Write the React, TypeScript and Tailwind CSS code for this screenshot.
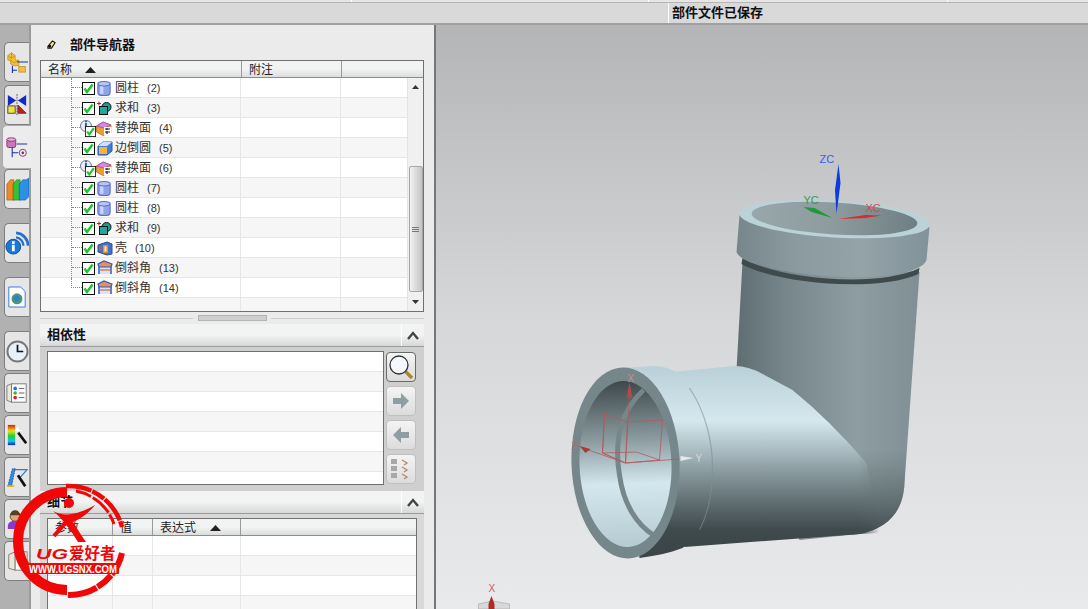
import type { ReactNode } from 'react';

const FONT = '"Liberation Sans", "Noto Sans CJK SC", sans-serif';

type Feature = { name: string; id: number; kind: 'cyl' | 'unite' | 'replace' | 'blend' | 'shell' | 'chamfer' };

const features: Feature[] = [
  { name: '圆柱', id: 2, kind: 'cyl' },
  { name: '求和', id: 3, kind: 'unite' },
  { name: '替换面', id: 4, kind: 'replace' },
  { name: '边倒圆', id: 5, kind: 'blend' },
  { name: '替换面', id: 6, kind: 'replace' },
  { name: '圆柱', id: 7, kind: 'cyl' },
  { name: '圆柱', id: 8, kind: 'cyl' },
  { name: '求和', id: 9, kind: 'unite' },
  { name: '壳', id: 10, kind: 'shell' },
  { name: '倒斜角', id: 13, kind: 'chamfer' },
  { name: '倒斜角', id: 14, kind: 'chamfer' },
];

function Check({ className }: { className: string }) {
  return (
    <svg viewBox="0 0 13 13" className={className}>
      <rect x="0.5" y="0.5" width="12" height="12" fill="#fff" stroke="#111" />
      <path d="M2.5 6.5 L5 10 L10.5 2.5" fill="none" stroke="#19c52c" strokeWidth="2.4" />
    </svg>
  );
}

function FeatureIcon({ kind }: { kind: Feature['kind'] }) {
  if (kind === 'cyl') {
    return (
      <svg viewBox="1.5 0.5 12 13.5" className="w-[14px] h-[15px]">
        <rect x="2" y="2" width="11" height="11.5" rx="3" fill="#8ea4ea" stroke="#5a70c8" />
        <rect x="4" y="4" width="3" height="8" fill="#c8d4f8" />
        <ellipse cx="7.5" cy="3" rx="5.5" ry="2" fill="#b9c6f2" stroke="#5a70c8" />
      </svg>
    );
  }
  if (kind === 'unite') {
    return (
      <svg viewBox="0 0 15 15" className="w-[15px] h-[15px]">
        <path d="M0 2.5 H4 M2 0.5 V4.5" stroke="#e01010" />
        <circle cx="9.5" cy="6" r="4.5" fill="#1f9c92" stroke="#111" />
        <rect x="2.5" y="5.5" width="8" height="8" fill="#23a89c" stroke="#111" />
      </svg>
    );
  }
  if (kind === 'blend') {
    return (
      <svg viewBox="0 0 16 15" className="w-[16px] h-[15px]">
        <path d="M1 5 L6 1 H15 V10 L10 14 H1 Z" fill="#3f80d8" stroke="#2a5aa8" />
        <path d="M1 5 L6 1 H15 L10 5 Z" fill="#cfe2fa" />
        <path d="M2 6 H10 V13 H2 Z" fill="#f6b23c" />
      </svg>
    );
  }
  if (kind === 'shell') {
    return (
      <svg viewBox="0 0 16 15" className="w-[16px] h-[15px]">
        <path d="M1 4 L10 1 L15 3 V13 L10 14 L1 11 Z" fill="#3f72c8" stroke="#2a4c90" />
        <rect x="6" y="4" width="5" height="8" fill="#f08a28" />
        <rect x="7.5" y="5.5" width="2" height="5" fill="#fff0d0" />
        <path d="M2 6 L5 5 V10 L2 9 Z" fill="#d8562a" />
      </svg>
    );
  }
  if (kind === 'chamfer') {
    return (
      <svg viewBox="0 0 16 16" className="w-[16px] h-[16px]">
        <path d="M1 4 L7 1 L15 4 V14 H1 Z" fill="#d4e4fa" />
        <path d="M1 4 L7 1 L15 4 L14 7 H2 Z" fill="#f08c58" stroke="#1e5ed0" strokeWidth="1.2" />
        <path d="M2 7 V14 M14 7 V14" stroke="#1e5ed0" strokeWidth="1.4" />
        <path d="M2 10 H14" stroke="#d86a30" strokeWidth="1.2" />
      </svg>
    );
  }
  return (
    <svg viewBox="0 0 16 15" className="w-[16px] h-[15px]">
      <path d="M0.5 5 L7 1 L15 4 V12 L7 14.5 L0.5 11 Z" fill="#f39a28" stroke="#b05a20" strokeWidth="0.7" />
      <path d="M0.5 5 L7 1 L15 4 L8 7 Z" fill="#d28adf" stroke="#8a4aa8" strokeWidth="0.7" />
      <rect x="8" y="6" width="7.5" height="8.5" fill="#fff" />
      <path d="M9 8 H14 M9 11 H14 M11 7 V9 M11 10 V13" stroke="#222" strokeWidth="1.2" />
    </svg>
  );
}

function TreeRow({ item, index }: { item: Feature; index: number }) {
  const last = index === features.length - 1;
  return (
    <div className="h-5 flex items-start">
      <div className="w-[200px] h-5 flex items-start pl-[30px] shrink-0">
        {last ? (
          <div className="w-[11px] h-[10px] border-l border-b border-dotted border-[#8a8a8a]" />
        ) : (
          <div className="w-[11px] h-5 border-l border-dotted border-[#8a8a8a]">
            <div className="h-[10px] border-b border-dotted border-[#8a8a8a]" />
          </div>
        )}
        <div className="relative w-[33px] h-5 shrink-0 flex items-center">
          {item.kind === 'replace' ? (
            <>
              <div className="absolute left-[-2px] top-[2px] w-[12px] h-[12px] rounded-full bg-[#e6ecfa] border border-[#6a7698] flex items-center justify-center text-[10px] leading-none font-bold text-[#14205c]">
                i
              </div>
              <Check className="absolute left-[3px] top-[8px] w-[11px] h-[11px]" />
              <div className="absolute left-[14px] top-[3px]">
                <FeatureIcon kind={item.kind} />
              </div>
            </>
          ) : (
            <>
              <Check className="w-[13px] h-[13px] shrink-0" />
              <div className="ml-[2px] shrink-0 flex items-center">
                <FeatureIcon kind={item.kind} />
              </div>
            </>
          )}
        </div>
        <span className="text-[12px] leading-5 text-[#333] whitespace-nowrap">
          {item.name}
          <span className="ml-[8px] text-[11px]">({item.id})</span>
        </span>
      </div>
    </div>
  );
}

function HeaderCell({ width, children }: { width: string; children?: ReactNode }) {
  return (
    <div className={`${width} h-full border-r border-[#9a9a9a] flex items-center pl-[7px] pt-[1px] text-[12px] text-[#222] shrink-0`}>
      {children}
    </div>
  );
}

function Stripes({ rows, columns }: { rows: number; columns: string[] }) {
  return (
    <div className="relative">
      {Array.from({ length: rows }).map((_, i) => (
        <div key={i} className={`h-5 flex border-b border-[#e6e6e6] ${i % 2 ? 'bg-[#f6f6f6]' : 'bg-white'}`}>
          {columns.map((w) => (
            <div key={w} className={`${w} h-full border-r border-[#e6e6e6] shrink-0`} />
          ))}
        </div>
      ))}
    </div>
  );
}

function SectionHeader({ title, height }: { title: string; height: string }) {
  return (
    <div className={`${height} flex bg-gradient-to-b from-[#f2f3f3] from-50% to-[#d6d7d7] border-b border-[#9c9c9c]`}>
      <div className="flex-1 pl-[7px] flex items-center text-[13px] font-bold text-[#111]">{title}</div>
      <div className="w-[23px] border-l border-white flex items-center justify-center">
        <svg viewBox="0 0 12 9" className="w-[12px] h-[9px]">
          <path d="M1 8 L6 2 L11 8" fill="none" stroke="#444" strokeWidth="2.4" />
        </svg>
      </div>
    </div>
  );
}

function SideButton({ active, children }: { active?: boolean; children: ReactNode }) {
  return (
    <div
      className={`w-[30px] h-[30px] rounded-[4px] border flex items-center justify-center bg-gradient-to-b from-[#f4f4f4] to-[#dcdcdc] ${
        active ? 'border-[#6a6a6a]' : 'border-[#c0c0c0]'
      }`}
    >
      {children}
    </div>
  );
}

function RailTab({ selected, className, children }: { selected?: boolean; className?: string; children: ReactNode }) {
  return (
    <div
      className={`shrink-0 rounded-l-[5px] flex items-center justify-center overflow-hidden ${
        selected
          ? 'h-[44px] w-[29px] ml-[2px] bg-[#ececec] border-l border-t border-b border-[#aaa]'
          : 'h-[40px] w-[25px] ml-[4px] bg-[#e6e6e6] border border-r-0 border-[#7e7e7e]'
      } ${className ?? ''}`}
    >
      {children}
    </div>
  );
}

function RailIcons() {
  return (
    <div className="w-[31px] shrink-0 bg-[#b1b1b1] flex flex-col pt-[17px] border-r-2 border-[#9a9a9a]">
      <RailTab>
        <svg viewBox="0 0 24 24" className="w-[22px] h-[22px]">
          <path d="M2 5 L6 2 L10 5 V10 L14 10 V16 L9 16 L5 14 V10 L2 10 Z" fill="#f2c23a" stroke="#b88a18" strokeWidth="0.8" />
          <path d="M6 2 V8 M2 5 L6 8 L10 5 M5 10 L9 13 L14 10" fill="none" stroke="#b88a18" strokeWidth="0.8" />
          <path d="M7 16 V24 M7 21 H12 M12 12 H24" stroke="#1a30b8" strokeWidth="1.2" />
          <rect x="14" y="17" width="7" height="6" fill="#f2c23a" stroke="#b88a18" strokeWidth="0.8" />
        </svg>
      </RailTab>
      <RailTab className="mt-[3px]">
        <svg viewBox="0 0 24 24" className="w-[22px] h-[22px]">
          <path d="M2 1 L11 7 L2 13 Z M22 1 L13 7 L22 13 Z" fill="#1428c8" />
          <path d="M12 0 V24" stroke="#555" strokeDasharray="2 1" />
          <rect x="2" y="13" width="8" height="8" fill="#f2e23a" stroke="#444" />
          <path d="M13 12 L22 21 H13 Z" fill="#d01818" stroke="#444" />
        </svg>
      </RailTab>
      <RailTab selected>
        <svg viewBox="0 0 26 26" className="w-[23px] h-[23px]">
          <rect x="1" y="3" width="10" height="10" rx="2" fill="#c87ab4" stroke="#8a2a70" />
          <ellipse cx="6" cy="4" rx="5" ry="2" fill="#e6b4d8" stroke="#8a2a70" />
          <path d="M12 9 H24 M7 13 V24 M7 19 H14" stroke="#1a30b8" strokeWidth="1.2" />
          <circle cx="19" cy="19" r="4" fill="none" stroke="#8a2a70" />
          <circle cx="19" cy="19" r="1.5" fill="#8a2a70" />
        </svg>
      </RailTab>
      <RailTab>
        <svg viewBox="0 0 26 28" className="w-[23px] h-[25px]">
          <path d="M1 8 L5 3 H9 V26 H1 Z" fill="#f08a20" stroke="#8a4a10" strokeWidth="0.6" />
          <path d="M8 8 L12 3 H16 V26 H8 Z" fill="#38c038" stroke="#186a18" strokeWidth="0.6" />
          <path d="M15 8 L19 3 H23 L26 1 V22 L22 26 H15 Z" fill="#2a90e8" stroke="#104a8a" strokeWidth="0.6" />
        </svg>
      </RailTab>
      <RailTab className="mt-[14px]">
        <svg viewBox="0 0 26 26" className="w-[24px] h-[24px]">
          <path d="M12 2 A14 14 0 0 1 25 16" fill="none" stroke="#2a70c8" strokeWidth="3" />
          <path d="M12 7 A9 9 0 0 1 20 16" fill="none" stroke="#2a70c8" strokeWidth="2.5" />
          <circle cx="9" cy="17" r="8" fill="#1a78d8" stroke="#0c4a90" />
          <rect x="7.5" y="15" width="3" height="7" fill="#fff" />
          <rect x="7.5" y="11" width="3" height="3" fill="#fff" />
        </svg>
      </RailTab>
      <RailTab className="mt-[14px]">
        <svg viewBox="0 0 22 24" className="w-[20px] h-[22px]">
          <path d="M2 1 H15 L20 6 V23 H2 Z" fill="#fff" stroke="#2a70d8" />
          <circle cx="11" cy="14" r="6" fill="#4a9a6a" />
          <path d="M7 12 L11 10 L15 12 L13 16 L9 17 Z" fill="#3a7ad0" />
        </svg>
      </RailTab>
      <RailTab className="mt-[14px]">
        <svg viewBox="0 0 24 24" className="w-[23px] h-[23px]">
          <circle cx="12" cy="12" r="10.5" fill="#e8f0fa" stroke="#777" strokeWidth="2" />
          <path d="M12 5 V12 H18" fill="none" stroke="#111" strokeWidth="1.8" />
        </svg>
      </RailTab>
      <RailTab className="mt-[2px]">
        <svg viewBox="0 0 24 24" className="w-[22px] h-[22px]">
          <path d="M1 4 L6 2 V22 L1 20 Z" fill="#ece8d8" stroke="#777" />
          <rect x="6" y="2" width="16" height="20" fill="#fff" stroke="#777" />
          <circle cx="10" cy="7" r="2" fill="#2a70d8" />
          <circle cx="10" cy="12" r="2" fill="#38b838" />
          <circle cx="10" cy="17" r="2" fill="#d82020" />
          <path d="M14 7 H20 M14 12 H20 M14 17 H20" stroke="#555" />
        </svg>
      </RailTab>
      <RailTab className="mt-[2px]">
        <svg viewBox="0 0 24 24" className="w-[22px] h-[22px]">
          <defs>
            <linearGradient id="rainbow" x1="0" y1="0" x2="0" y2="1">
              <stop offset="0" stopColor="#e01818" />
              <stop offset="0.3" stopColor="#e8e018" />
              <stop offset="0.55" stopColor="#18d038" />
              <stop offset="0.8" stopColor="#18c8e0" />
              <stop offset="1" stopColor="#1818e0" />
            </linearGradient>
          </defs>
          <rect x="2" y="1" width="8" height="22" fill="url(#rainbow)" />
          <path d="M13 9 L22 21" stroke="#111" strokeWidth="3" />
          <path d="M11 6 L13 2 L14 6 L18 7 L14 8 L13 11 L12 8 L9 7 Z" fill="#fff" />
        </svg>
      </RailTab>
      <RailTab className="mt-[2px]">
        <svg viewBox="0 0 24 24" className="w-[22px] h-[22px]">
          <path d="M2 22 L7 3 H10 L6 22 Z" fill="#3a88d8" stroke="#1a58a8" strokeDasharray="2 1" />
          <path d="M9 4 H23 L14 14" fill="none" stroke="#3a78c8" strokeWidth="1.4" />
          <path d="M13 10 L21 22" stroke="#111" strokeWidth="3" />
          <path d="M1 22 H9" stroke="#e0b818" strokeWidth="2" />
        </svg>
      </RailTab>
      <RailTab className="mt-[2px]">
        <svg viewBox="0 0 24 26" className="w-[22px] h-[24px]">
          <circle cx="10" cy="10" r="5.5" fill="#d8a878" stroke="#6a4a20" />
          <path d="M4.5 9 A5.5 5.5 0 0 1 15.5 9 Z" fill="#5a4020" />
          <path d="M2 24 V20 Q3 15 10 15 Q17 15 18 20 V24 Z" fill="#8a3ac8" />
          <rect x="18" y="2" width="6" height="5" fill="#d8a040" />
        </svg>
      </RailTab>
      <RailTab className="mt-[2px]">
        <svg viewBox="0 0 24 26" className="w-[22px] h-[24px]">
          <path d="M3 6 L10 3 V23 L3 21 Z" fill="#ece8d8" stroke="#777" />
          <rect x="10" y="3" width="13" height="20" fill="#fff" stroke="#777" />
        </svg>
      </RailTab>
    </div>
  );
}

function PartNavigator() {
  return (
    <div className="w-[405px] shrink-0 bg-[#ebebeb] border-r-2 border-[#777] flex flex-col pl-[9px] pr-[10px] overflow-hidden">
      <div className="h-[35px] shrink-0 flex items-center pl-[7px] pt-[4px]">
        <svg viewBox="0 0 10 10" className="w-[9px] h-[9px]">
          <path d="M1 7 L6 1 L9 3 L5 9 H1 Z" fill="#f4e48a" stroke="#111" strokeWidth="1.2" />
          <circle cx="3" cy="7" r="1.6" fill="#111" />
        </svg>
        <span className="ml-[14px] text-[13px] font-bold text-[#111]">部件导航器</span>
      </div>

      <div className="h-[252px] shrink-0 border border-[#707070] bg-white flex flex-col overflow-hidden">
        <div className="h-[17px] shrink-0 flex bg-gradient-to-b from-[#f2f3f3] from-50% to-[#dcdddd] border-b border-[#8c8c8c]">
          <HeaderCell width="w-[201px]">
            名称
            <svg viewBox="0 0 11 6" className="ml-[13px] w-[11px] h-[6px]">
              <path d="M0 6 L5.5 0 L11 6 Z" fill="#222" />
            </svg>
          </HeaderCell>
          <HeaderCell width="w-[100px]">附注</HeaderCell>
        </div>
        <div className="relative flex-1 flex overflow-hidden">
          <div className="w-[366px] shrink-0">
            <div className="relative">
              <Stripes rows={12} columns={['w-[200px]', 'w-[100px]']} />
              <div className="absolute inset-0">
                {features.map((f, i) => (
                  <TreeRow key={f.id} item={f} index={i} />
                ))}
              </div>
            </div>
          </div>
          <div className="flex-1 bg-[#f0f0f0] border-l border-[#e4e4e4] flex flex-col items-center pt-[7px] pb-[7px]">
            <svg viewBox="0 0 7 4" className="w-[7px] h-[4px] shrink-0">
              <path d="M0 4 L3.5 0 L7 4 Z" fill="#333" />
            </svg>
            <div className="mt-[77px] w-[14px] h-[126px] shrink-0 rounded-[2px] border border-[#a8a8a8] bg-gradient-to-r from-[#f2f2f2] to-[#c4c4c4] flex flex-col items-center justify-center gap-[1px]">
              <div className="w-[7px] border-t border-[#777]" />
              <div className="w-[7px] border-t border-[#777]" />
              <div className="w-[7px] border-t border-[#777]" />
            </div>
            <svg viewBox="0 0 7 4" className="mt-[8px] w-[7px] h-[4px] shrink-0">
              <path d="M0 0 L3.5 4 L7 0 Z" fill="#333" />
            </svg>
          </div>
        </div>
      </div>

      <div className="h-[12px] shrink-0 flex items-center">
        <div className="w-[153px] border-t border-[#cfcfcf] border-b-white" />
        <div className="ml-[5px] w-[69px] h-[6px] bg-[#cfcfcf] border border-[#b4b4b4]" />
        <div className="ml-[4px] flex-1 border-t border-[#cfcfcf]" />
      </div>

      <SectionHeader title="相依性" height="h-[23px] shrink-0" />
      <div className="h-[144px] shrink-0 bg-[#cfcfcf] flex pl-[7px] pt-[4px]">
        <div className="w-[337px] h-[134px] border border-[#707070] bg-white overflow-hidden">
          <Stripes rows={7} columns={[]} />
        </div>
        <div className="ml-[2px] flex flex-col gap-[4px] pt-[1px]">
          <SideButton active>
            <svg viewBox="0 0 26 26" className="w-[26px] h-[26px]">
              <path d="M17 17 L24 24" stroke="#a88838" strokeWidth="3.4" />
              <circle cx="11" cy="11" r="9" fill="#f4f8fc" stroke="#333" strokeWidth="1.3" />
            </svg>
          </SideButton>
          <SideButton>
            <svg viewBox="0 0 16 16" className="w-[16px] h-[16px]">
              <path d="M0 5 H8 V0 L16 8 L8 16 V11 H0 Z" fill="#8e9ea2" />
            </svg>
          </SideButton>
          <SideButton>
            <svg viewBox="0 0 16 16" className="w-[16px] h-[16px]">
              <path d="M16 5 H8 V0 L0 8 L8 16 V11 H16 Z" fill="#8e9ea2" />
            </svg>
          </SideButton>
          <SideButton>
            <svg viewBox="0 0 22 22" className="w-[22px] h-[22px]">
              <rect x="1" y="1" width="6" height="5" fill="#a8a8a8" />
              <rect x="1" y="8" width="6" height="5" fill="#a8a8a8" />
              <rect x="1" y="15" width="6" height="5" fill="#a8a8a8" />
              <path d="M12 2 L17 5 L14 7 M12 9 L17 12 L14 14 M12 16 L17 19 L14 21" fill="none" stroke="#b88a70" strokeWidth="1.4" />
            </svg>
          </SideButton>
        </div>
      </div>

      <SectionHeader title="细节" height="h-[23px] shrink-0" />
      <div className="flex-1 min-h-0 bg-[#d8d8d8] pl-[7px] pr-[7px] pt-[4px]">
        <div className="h-full border border-[#707070] border-b-0 bg-white overflow-hidden">
          <div className="h-[17px] flex bg-gradient-to-b from-[#f2f3f3] from-50% to-[#dcdddd] border-b border-[#8c8c8c]">
            <HeaderCell width="w-[65px]">参数</HeaderCell>
            <HeaderCell width="w-[40px]">值</HeaderCell>
            <HeaderCell width="w-[88px]">
              表达式
              <svg viewBox="0 0 11 6" className="ml-[14px] w-[11px] h-[6px]">
                <path d="M0 6 L5.5 0 L11 6 Z" fill="#222" />
              </svg>
            </HeaderCell>
          </div>
          <Stripes rows={4} columns={['w-[65px]', 'w-[40px]', 'w-[88px]']} />
        </div>
      </div>
    </div>
  );
}

function Model() {
  return (
    <svg viewBox="437 25 651 584" className="block w-full h-full">
      <defs>
        <linearGradient id="pipeV" x1="738" y1="0" x2="920" y2="0" gradientUnits="userSpaceOnUse">
          <stop offset="0" stopColor="#5f6e72" />
          <stop offset="0.25" stopColor="#76858a" />
          <stop offset="0.65" stopColor="#8d9da1" />
          <stop offset="1" stopColor="#7f8f93" />
        </linearGradient>
        <linearGradient id="flangeTop" x1="737" y1="0" x2="930" y2="0" gradientUnits="userSpaceOnUse">
          <stop offset="0" stopColor="#76868a" />
          <stop offset="0.3" stopColor="#8b9a9e" />
          <stop offset="0.65" stopColor="#93a3a7" />
          <stop offset="1" stopColor="#82929a" />
        </linearGradient>
        <linearGradient id="topHole" x1="752" y1="0" x2="918" y2="0" gradientUnits="userSpaceOnUse">
          <stop offset="0" stopColor="#98a7ab" />
          <stop offset="0.5" stopColor="#8d9b9f" />
          <stop offset="1" stopColor="#6f7e82" />
        </linearGradient>
        <linearGradient id="elbow" x1="0" y1="366" x2="0" y2="548" gradientUnits="userSpaceOnUse">
          <stop offset="0" stopColor="#b9d0d8" />
          <stop offset="0.3" stopColor="#d4e8ee" />
          <stop offset="0.5" stopColor="#a0b2b7" />
          <stop offset="0.59" stopColor="#87979b" />
          <stop offset="0.735" stopColor="#647276" />
          <stop offset="0.9" stopColor="#3f4a4c" />
          <stop offset="1" stopColor="#3c4648" />
        </linearGradient>
        <linearGradient id="corner" x1="0" y1="450" x2="0" y2="535" gradientUnits="userSpaceOnUse">
          <stop offset="0" stopColor="#5b696c" stopOpacity="0" />
          <stop offset="1" stopColor="#3f4a4c" />
        </linearGradient>
        <linearGradient id="fadeH" x1="858" y1="0" x2="880" y2="0" gradientUnits="userSpaceOnUse">
          <stop offset="0" stopColor="#fff" />
          <stop offset="1" stopColor="#000" />
        </linearGradient>
        <linearGradient id="hole" x1="0" y1="381" x2="0" y2="547" gradientUnits="userSpaceOnUse">
          <stop offset="0" stopColor="#3e484a" />
          <stop offset="0.35" stopColor="#8a9a9e" />
          <stop offset="0.62" stopColor="#d3e7ee" />
          <stop offset="1" stopColor="#b5cbd2" />
        </linearGradient>
        <mask id="bodyFade" maskUnits="userSpaceOnUse" x="600" y="340" width="320" height="240">
          <rect x="600" y="340" width="320" height="240" fill="url(#fadeH)" />
        </mask>
      </defs>

      {/* vertical pipe + elbow corner */}
      <path d="M743 262 L737 370 L800 540 L860 534 C890 528 904 510 905 483 L920 272 Z" fill="url(#pipeV)" />
      <path d="M800 450 L907 450 L905 483 C904 510 890 528 860 534 L800 538 Z" fill="url(#corner)" />
      <path d="M743 258 C780 280 880 288 920 268 L919 274 C880 292 780 285 742 264 Z" fill="#3f4a4c" />

      {/* top flange */}
      <path d="M740 215 L737 252 C745 276 915 290 927 260 L930 227 Z" fill="url(#flangeTop)" />
      <ellipse cx="835" cy="219" rx="95.5" ry="18.5" fill="#bcd2d9" transform="rotate(3.5 835 219)" />
      <ellipse cx="835" cy="218.5" rx="83" ry="16" fill="url(#topHole)" transform="rotate(3.5 835 218.5)" />

      {/* elbow body */}
      <path d="M672 372 L735 366 Q750 366 765 375 L793 390 Q830 420 867 463 L880 533 L860 534 L685 547 Z" fill="url(#elbow)" mask="url(#bodyFade)" />

      {/* left flange */}
      <path d="M623 368 L655 366 C690 366 713 410 713 467 C713 510 703 535 683 548 C670 553 655 556 640 558 Z" fill="url(#elbow)" />
      <path d="M690 388 C705 410 713 440 713 467 C713 495 708 515 700 530" fill="none" stroke="#7f8f93" strokeWidth="1.2" opacity="0.6" />
      <ellipse cx="626" cy="463" rx="54" ry="95.5" fill="#76878b" transform="rotate(-2 626 463)" />
      <ellipse cx="626" cy="464" rx="46" ry="83" fill="url(#hole)" transform="rotate(-2 626 464)" />
      <path d="M644 390 C622 410 614 440 620 475 C624 505 638 525 654 535" fill="none" stroke="#76878b" strokeWidth="5" />

      {/* WCS triad on the flange */}
      <g stroke="#b05a5a" strokeWidth="0.8" fill="none">
        <path d="M605 414 L628 422 L663 420 L660 460 L637 452 L603 453 Z" />
        <path d="M605 414 L603 453 L626 463 L660 460 M628 422 L626 463 M603 453 L626 463" />
        <path d="M586 449 L626 463 L680 459 M626 463 L630 395" />
      </g>
      <path d="M630 382 L633 398 L627 398 Z" fill="#b04a4a" />
      <path d="M580 446 L591 449 L586 453 Z" fill="#a83a3a" />
      <path d="M681 456 L694 458 L681 461 Z" fill="#e8e8e8" />
      <text x="628" y="382" fontSize="10" fill="#c89090" fontFamily="Liberation Sans, sans-serif">X</text>
      <text x="572" y="450" fontSize="10" fill="#b06a6a" fontFamily="Liberation Sans, sans-serif">Z</text>
      <text x="696" y="462" fontSize="10" fill="#d8d8d8" fontFamily="Liberation Sans, sans-serif">Y</text>

      {/* work triad */}
      <path d="M839 164 L841 183 L837 214 L835.5 190 Z" fill="#0b3ce0" />
      <path d="M804 207 L815 208 L833 218 L812 212 Z" fill="#1e9a3a" />
      <path d="M839 219 L866 215 L882 215.5 L866 218 Z" fill="#e02828" />
      <text x="820" y="163" fontSize="11" fill="#3a60f0" fontFamily="Liberation Sans, sans-serif">ZC</text>
      <text x="804" y="204" fontSize="11" fill="#3a9a4a" fontFamily="Liberation Sans, sans-serif">YC</text>
      <text x="866" y="212" fontSize="11" fill="#d84a4a" fontFamily="Liberation Sans, sans-serif">XC</text>

      {/* datum csys at the bottom */}
      <path d="M479 604 L493 601 L510 604 V609 H479 Z" fill="#d8d8d8" stroke="#bbb" />
      <path d="M492 596 L495 604 V609 H489 V604 Z" fill="#b02a2a" />
      <text x="489" y="592" fontSize="10" fill="#c85a5a" fontFamily="Liberation Sans, sans-serif">X</text>
    </svg>
  );
}

function Watermark() {
  return (
    <div className="absolute left-[8px] top-[478px] w-[125px] h-[128px] pointer-events-none">
      <svg viewBox="8 478 125 128" className="absolute inset-0 w-full h-full">
        <g fill="none" stroke="#f00808">
          <path d="M67 492 A49 49 0 0 0 67 590" strokeWidth="10" />
          <path d="M66 486 A55 55 0 0 1 122 527" strokeWidth="4.5" strokeDasharray="26 1 14 1" />
          <path d="M76 491 A50 50 0 0 1 114 524" strokeWidth="3" strokeDasharray="16 2 22 2" />
          <path d="M68 595 A54 54 0 0 0 122 553" strokeWidth="6" strokeDasharray="30 1 18 1" />
          <path d="M48 494 A52 52 0 0 0 24 570" strokeWidth="3" strokeDasharray="24 1" />
        </g>
        <circle cx="69" cy="503" r="5" fill="#f00808" />
        <path d="M53 511 C64 517 78 515 95 505 C86 516 78 520 73 522 C78 530 83 538 86 542 H78 C72 532 64 520 53 511 Z" fill="#f00808" />
        <path d="M67 521 L54 536" stroke="#f00808" strokeWidth="4" />
        <text x="36" y="559" fontSize="15" fontWeight="700" fontStyle="italic" fill="#f00808" textLength="32" lengthAdjust="spacingAndGlyphs" fontFamily="Liberation Sans, sans-serif">UG</text>
        <text x="69" y="559" fontSize="15.5" fontWeight="700" fill="#f00808" fontFamily="Noto Sans CJK SC, sans-serif">爱好者</text>
        <rect x="28" y="563" width="91" height="11" rx="1" fill="#f00808" />
        <text x="29" y="572.5" fontSize="10" fontWeight="700" fill="#fff" textLength="88" lengthAdjust="spacingAndGlyphs" fontFamily="Liberation Sans, sans-serif">WWW.UGSNX.COM</text>
      </svg>
    </div>
  );
}

export default function App() {
  return (
    <div className="relative w-[1088px] h-[609px] overflow-hidden flex flex-col bg-[#b4b5b6]" style={{ fontFamily: FONT }}>
      <div className="h-[3px] shrink-0 flex bg-[#e6e6e6] border-b border-[#b5b5b5]">
        <div className="w-[352px] border-r border-white" />
        <div className="w-[297px] border-r border-white" />
        <div className="w-[299px] border-r border-white" />
      </div>
      <div className="h-[22px] shrink-0 flex bg-[#d9d9d9] border-b-2 border-[#a0a0a0]">
        <div className="w-[669px] border-r border-white" />
        <div className="pl-[3px] flex items-center text-[13px] font-bold text-[#111]">部件文件已保存</div>
      </div>
      <div className="flex-1 min-h-0 flex">
        <RailIcons />
        <PartNavigator />
        <div className="flex-1 min-w-0 bg-gradient-to-b from-[#b4b5b6] via-[#d6d7d8] via-50% to-[#e9eaeb]">
          <Model />
        </div>
      </div>
      <Watermark />
    </div>
  );
}
